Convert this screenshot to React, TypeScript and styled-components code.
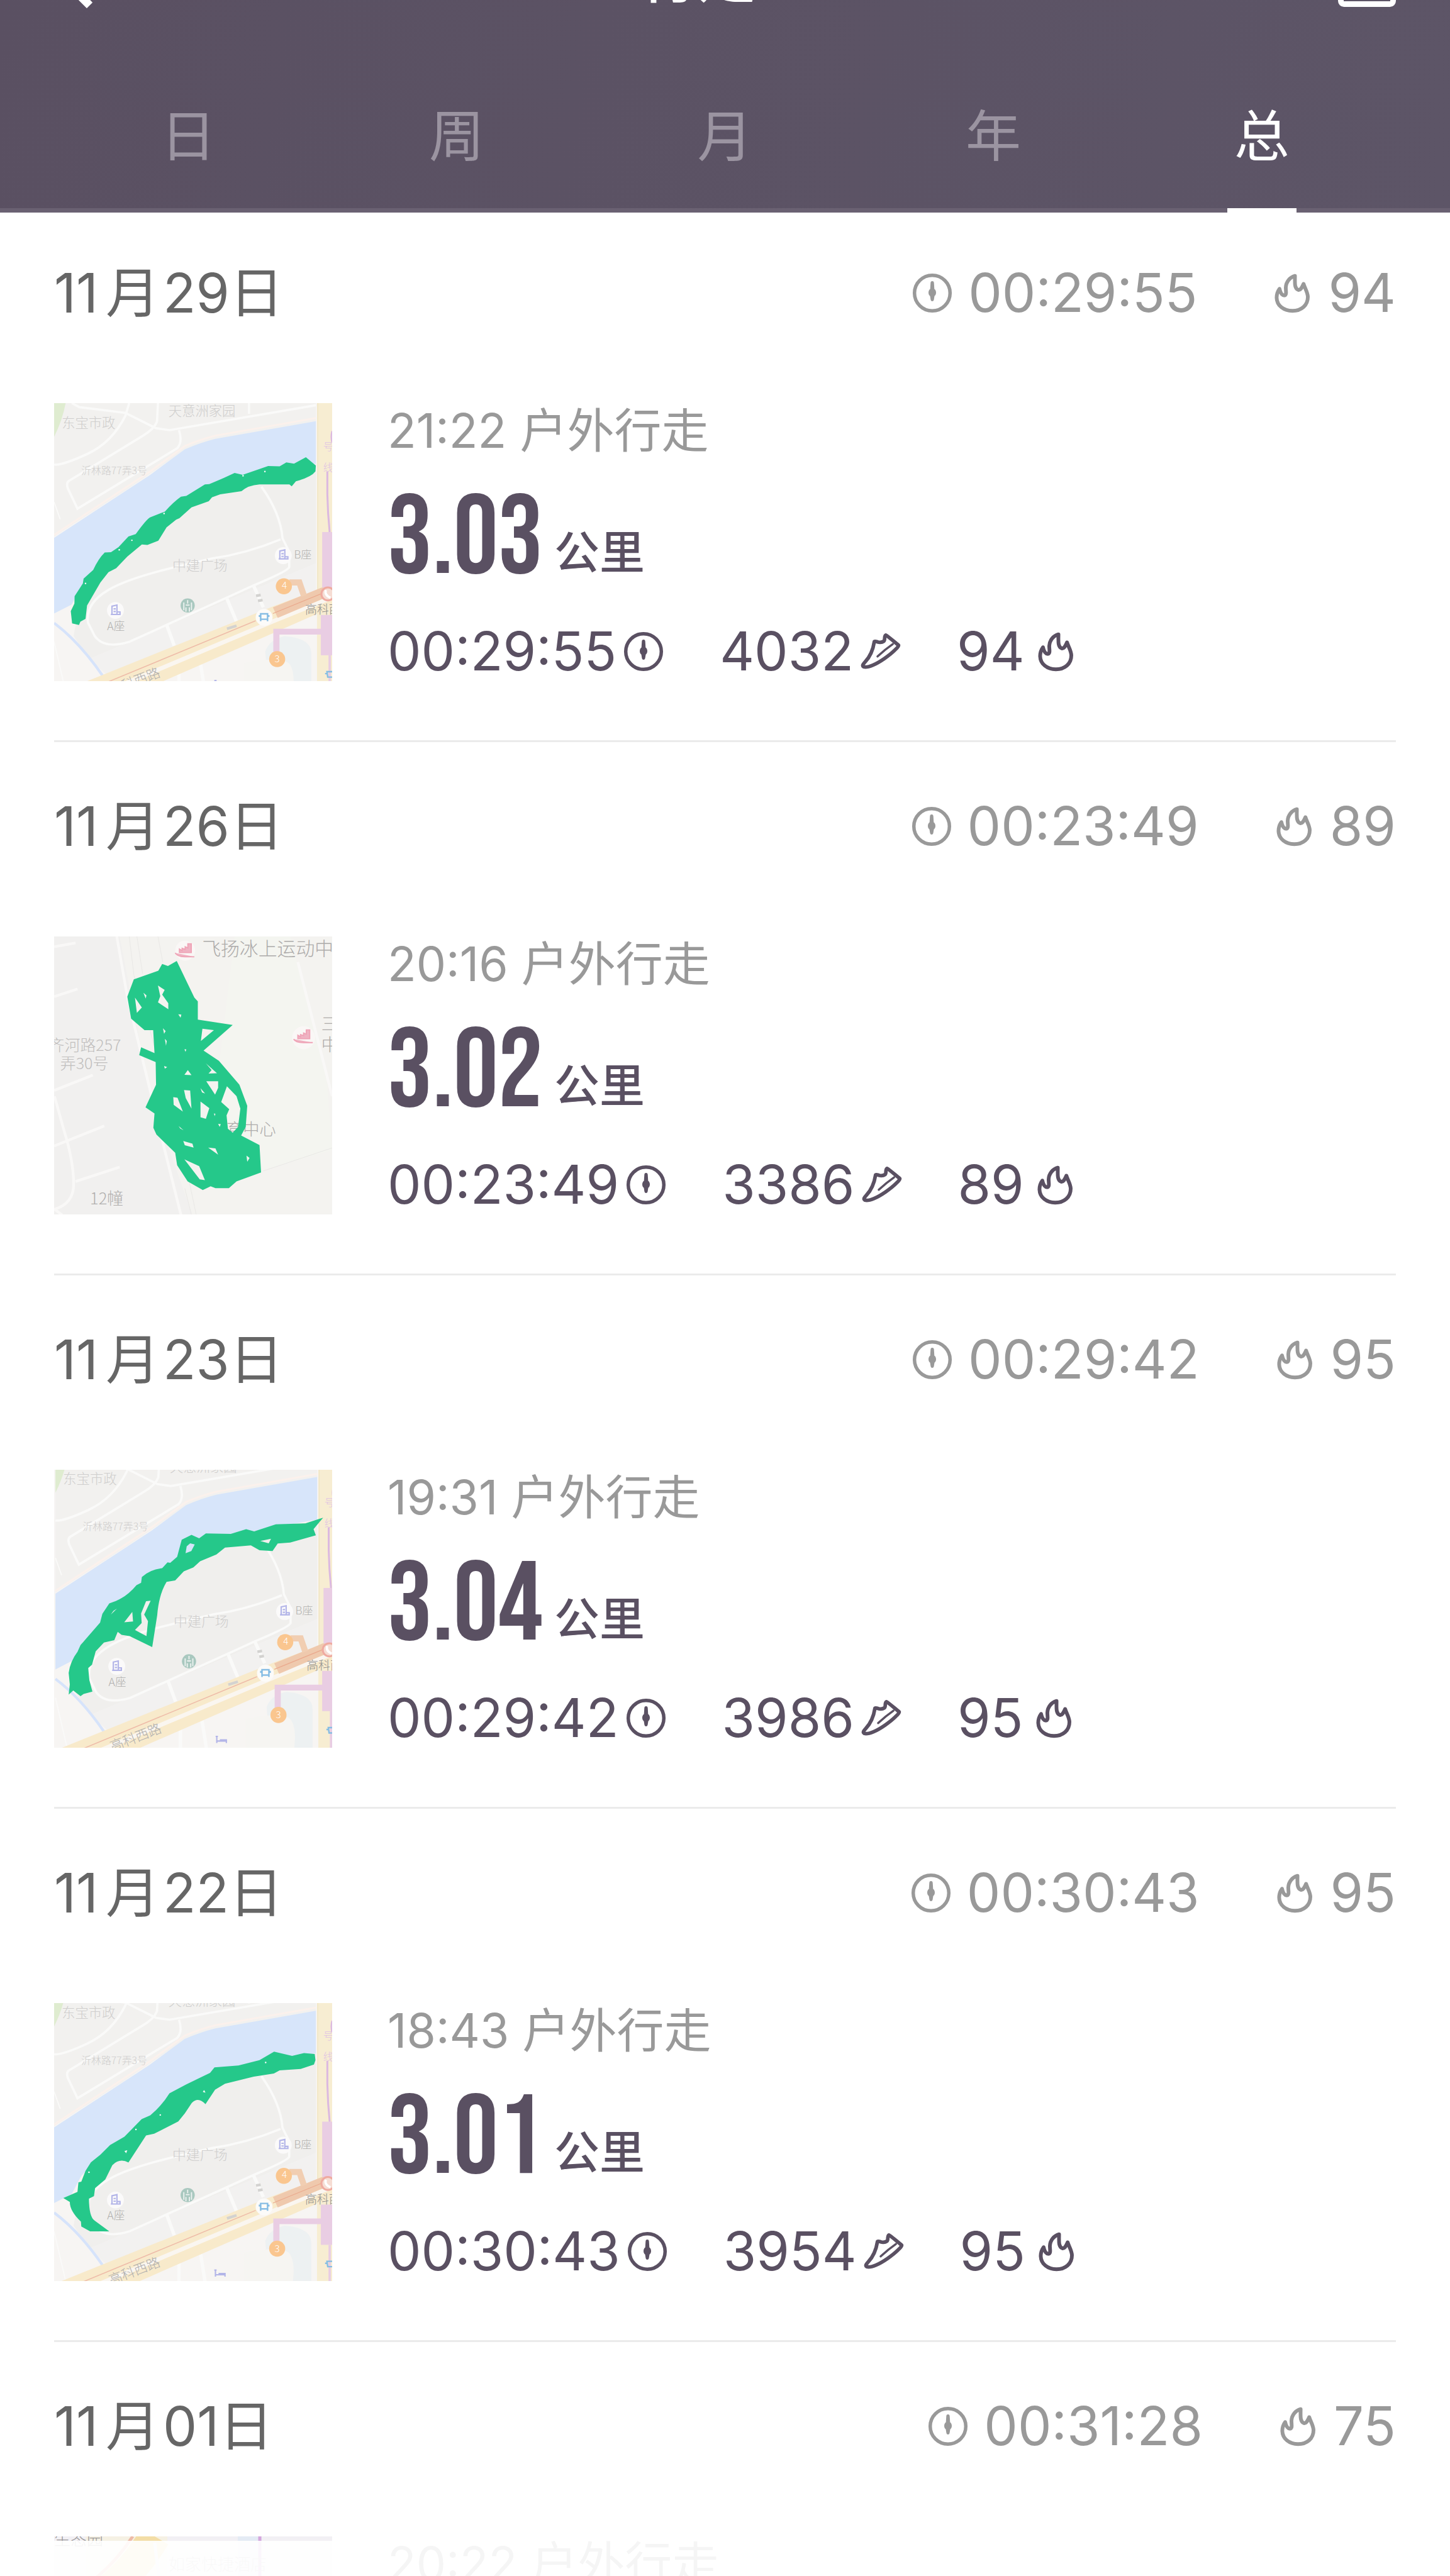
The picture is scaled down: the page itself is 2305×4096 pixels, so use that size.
import React, { useState } from "react";
import styled, { createGlobalStyle } from "styled-components";

const GlobalStyle = createGlobalStyle`
  *, *::before, *::after { box-sizing: border-box; }
  body {
    margin: 0;
    background: #fff;
    font-family: Inter, "Noto Sans CJK SC", sans-serif;
  }
  button { font: inherit; border: 0; background: none; padding: 0; cursor: pointer; }
`;

const ink = "#5a5062";
const muted = "#999";
const routeGreen = "#25c88a";

const Screen = styled.div`
  height: 100vh;
  overflow: hidden;
  position: relative;
`;

/* ---------- header ---------- */

const Header = styled.header`
  position: relative;
  z-index: 1;
  color: #fff;
  background: linear-gradient(100deg, #5a5062, #5d5567);
`;

/* The bar is mostly scrolled out above the top edge. */
const TopBar = styled.div`
  display: grid;
  grid-template-columns: 1fr auto 1fr;
  align-items: center;
  height: 120px;
  margin-top: -97px;
  padding: 0 86px;
`;

const Title = styled.h1`
  margin: 0;
  padding-right: 86px;
  font-size: 92px;
  line-height: 84px;
  font-weight: 500;
`;

const IconButton = styled.button<{ $end?: boolean }>`
  display: flex;
  color: inherit;
  justify-self: ${(p) => (p.$end ? "end" : "start")};
`;

const Tabs = styled.div`
  display: flex;
  height: 315px;
  padding: 0 86px;
  box-shadow: inset 0 -7px #6a6172;
`;

const Tab = styled.button<{ $active: boolean }>`
  flex: 1;
  position: relative;
  padding-top: 70px;
  font-size: 88px;
  line-height: 120px;
  color: ${(p) => (p.$active ? "#fff" : "#9b94a1")};

  &::after {
    content: "";
    position: absolute;
    left: 50%;
    bottom: 0;
    width: 110px;
    height: 7px;
    margin-left: -55px;
    background: ${(p) => (p.$active ? "#fff" : "transparent")};
  }
`;

/* ---------- list ---------- */

const List = styled.ul`
  list-style: none;
  margin: -6px 0 0;
  padding: 0 86px;
`;

const Day = styled.li`
  height: 848px;
  border-bottom: 3px solid #ebebeb;
`;

const DayHead = styled.div`
  display: flex;
  align-items: center;
  justify-content: space-between;
  height: 268px;
  margin-bottom: 41px;
`;

const DateText = styled.h2`
  display: flex;
  margin: 0;
  font-size: 86px;
  line-height: 120px;
  font-weight: 400;
  color: #666;
`;

const MonthMark = styled.span`
  padding: 0 5px 0 12px;
`;

const Totals = styled.div`
  display: flex;
  gap: 118px;
  color: ${muted};
`;

const Figure = styled.span<{ $gap: number }>`
  display: flex;
  align-items: center;
  gap: ${(p) => p.$gap}px;
  font-size: 85px;
  line-height: 120px;
`;

const Walk = styled.article`
  display: flex;
  gap: 88px;
`;

const MapFrame = styled.div`
  flex: none;
  width: 442px;
  height: 442px;
  overflow: hidden;

  svg { display: block; width: 100%; height: 100%; }
`;

const Details = styled.div`
  min-width: 0;
`;

const WalkName = styled.p`
  margin: 0;
  font-size: 75px;
  line-height: 88px;
  color: ${muted};
`;

const Distance = styled.p`
  display: flex;
  align-items: flex-end;
  gap: 18px;
  margin: 29px 0 0;
  height: 200px;
  color: ${ink};
`;

const Kilometres = styled.strong`
  font-family: "Bebas Neue", "Roboto Condensed", Roboto, sans-serif;
  font-size: 178px;
  line-height: 200px;
  font-weight: 400;
`;

const Unit = styled.span`
  padding-bottom: 44px;
  font-size: 72px;
  line-height: 72px;
  font-weight: 500;
`;

const Stats = styled.div`
  display: flex;
  gap: 88px;
  margin-top: 18px;
  color: ${ink};
`;

const BottomFade = styled.div`
  position: absolute;
  left: 0;
  right: 0;
  bottom: 0;
  height: 56px;
  background: rgba(255, 255, 255, 0.9);
`;

/* ---------- icons ---------- */

const BackIcon = () => (
  <svg width="64" height="100" viewBox="0 0 64 100" fill="none" stroke="currentColor" strokeWidth="13" aria-hidden="true">
    <path d="M56.5 4.5 11 50l45.5 45.5" />
  </svg>
);

const CalendarIcon = () => (
  <svg width="92" height="96" viewBox="0 0 92 96" fill="none" stroke="currentColor" strokeWidth="9" aria-hidden="true">
    <rect x="4.500" y="12" width="83" height="79.500" rx="5" />
    <path d="M5 38h82M28 0v22M64 0v22" />
  </svg>
);

const ClockIcon = () => (
  <svg width="66" height="66" viewBox="0 0 66 66" aria-hidden="true">
    <circle cx="33" cy="33" r="28.300" fill="none" stroke="currentColor" strokeWidth="5.500" />
    <path
      d="M33 14c1.800 0 2.600 1.200 2.700 3l.6 9.500c1.800 1.200 2.700 3.300 2.700 5.700s-.9 4.300-2.500 5.500l-.8 5c-.3 2.300-1.200 3.300-2.700 3.300s-2.400-1-2.700-3.300l-.8-5c-1.600-1.200-2.500-3.100-2.500-5.500s.9-4.500 2.700-5.700l.6-9.500c.1-1.800.9-3 2.700-3z"
      fill="currentColor"
    />
  </svg>
);

const ShoeIcon = () => (
  <svg width="66" height="66" viewBox="36 42 288 288" fill="none" stroke="currentColor" strokeLinejoin="round" strokeLinecap="round" aria-hidden="true">
    <path
      d="M136 116C148 114 150 117 158 119C172 123 190 122 202 114C212 108 202 76 216 72C236 84 276 120 304 142C304 152 290 164 280 174C240 214 170 262 126 280C102 290 78 296 62 292C48 284 60 272 72 258C104 224 126 180 136 116Z"
      strokeWidth="25"
    />
    <path d="M264 134C232 156 188 192 158 220" strokeWidth="15" />
  </svg>
);

const FlameIcon = () => (
  <svg width="66" height="66" viewBox="25 45 290 290" fill="none" stroke="currentColor" strokeWidth="26" strokeLinejoin="round" aria-hidden="true">
    <path d="M190 70C154 80 128 112 126 150C125 174 134 200 118 206C98 208 88 188 82 160C66 182 62 204 62 222C64 278 112 314 172 314C234 314 280 276 280 216C278 182 258 154 250 126C240 146 232 170 214 168C184 158 190 116 190 70Z" />
  </svg>
);

/* ---------- maps ---------- */

const mapFont = { fontFamily: '"Noto Sans CJK SC", sans-serif', fontWeight: 300 };

const RiverMap = () => (
  <g style={mapFont}>
    <rect x="0" y="0" width="1600" height="1800" fill="#f7f5f3" />
    <path d="M58 84H1424V180L900 272L740 330L430 540L58 780Z" fill="#f2f1ef" />
    <path d="M58 60H122Q108 160 58 260Z" fill="#dfecd0" />
    <path d="M1424 400V920L240 1420L160 1300Q190 1080 430 830L720 600L1030 500Z" fill="#f0efed" />
    <path d="M240 1420L1424 920V1060L330 1500Z" fill="#f2f1f0" />
    <path d="M58 787L560 458L740 325Q820 290 900 270L1424 178V400L1200 440L1000 480L850 530L700 610L600 690L520 770L440 830L340 890L280 960L200 1040L150 1135L58 1182Z" fill="#d7e5fa" />
    <path d="M58 772L560 440L740 308Q820 274 900 254L1424 162" fill="none" stroke="#fbf1ec" strokeWidth="10" />

    <g fill="none" stroke="#fafaf9" strokeWidth="12">
      <path d="M150 84L190 105L430 135L590 215L660 225L1424 95" />
      <path d="M450 84L430 150Q360 290 230 350T58 405" />
      <path d="M600 84L595 180Q580 220 520 255L135 490Q120 500 130 530L180 635L700 320Q730 290 710 225" />
      <path d="M1075 84V140" />
      <path d="M1140 520Q1240 660 1250 790L1285 860V940Q1280 960 1100 1035L980 1090L450 1330Q320 1370 270 1300L235 1230Q220 1130 340 1060Q440 1000 690 940L880 895Q1060 870 1240 795" />
      <path d="M960 1105L1010 1225M645 1240L685 1350M1100 1040L1150 1150M710 1470V1700M820 1430L850 1620" strokeWidth="18" />
      <path d="M58 600L90 690M58 1330L130 1640" strokeWidth="6" />
    </g>
    <path d="M58 1232Q190 1330 315 1512" fill="none" stroke="#d6e3fb" strokeWidth="14" />
    <path d="M1160 1380Q1180 1320 1260 1300Q1400 1310 1400 1390V1620H1180Z" fill="#edf1f2" />
    <path d="M1050 1440Q1260 1400 1290 1450Q1320 1500 1300 1620H1050Z" fill="#f6f5f2" />

    <rect x="1430" y="0" width="80" height="1800" fill="#f7edd2" />
    <path d="M1434 84V1060" stroke="#ece0c0" strokeWidth="3" />
    <path d="M40 1612L1200 1145L1509 1030V1150L560 1565L300 1680Z" fill="#f8eacb" />
    <path d="M160 1660L1220 1215L1509 1098" fill="none" stroke="#faf6f0" strokeWidth="22" />
    <path d="M180 1605L1110 1220" stroke="#eebba8" strokeWidth="5" />
    <path d="M1200 1150L1450 1048L1509 1030V1085L1225 1205Z" fill="#efc9ad" />
    <path d="M1200 1182L1450 1080" stroke="#eaa98d" strokeWidth="4" />
    <path d="M1285 1020H1338L1362 1090" fill="none" stroke="#f1ceb2" strokeWidth="32" />

    <g fill="#e9cde3">
      <rect x="1457" y="757" width="52" height="290" />
      <rect x="1450" y="1190" width="60" height="210" />
      <path d="M1460 1262H1202V1400H1234V1292H1460Z" />
      <rect x="1490" y="1400" width="12" height="300" />
    </g>
    <path d="M1484 440V560Q1486 660 1496 757" fill="none" stroke="#dcb9e0" strokeWidth="10" />
    <path d="M1509 230Q1500 260 1509 290" fill="none" stroke="#dcb9e0" strokeWidth="8" />

    <g fill="#fac68f">
      <circle cx="1257" cy="1040" r="42" />
      <circle cx="1222" cy="1420" r="42" />
    </g>
    <g fill="#fff" fontSize="50" textAnchor="middle">
      <text x="1260" y="1052">4</text>
      <text x="1222" y="1438">3</text>
    </g>
    <circle cx="1487" cy="1080" r="34" fill="#f6ddd4" stroke="#efaaa0" strokeWidth="10" />
    <path d="M1476 1060Q1468 1086 1500 1100" fill="none" stroke="#fff" strokeWidth="12" />

    <circle cx="1254" cy="880" r="44" fill="#fbfafa" />
    <circle cx="378" cy="1166" r="44" fill="#fbfafa" />
    <path d="M1236 896V856L1262 850V896M1244 870H1256M1244 884H1256M1230 897H1278V886H1264" fill="none" stroke="#b3b5e8" strokeWidth="7" />
    <path d="M360 1184V1144L386 1138V1184M368 1158H380M368 1172H380M354 1187H402V1174H388" fill="none" stroke="#b3b5e8" strokeWidth="7" />
    <circle cx="755" cy="1140" r="37" fill="#a9c8bf" />
    <path d="M735 1125V1165M755 1112V1130M775 1125V1165M745 1138H765M746 1150V1172M764 1150V1172" stroke="#eef3f1" strokeWidth="6" />
    <circle cx="1154" cy="1202" r="44" fill="#fcfbf9" />
    <path d="M1136 1184H1172V1212H1136ZM1136 1214V1222M1172 1214V1222M1130 1190V1200M1178 1190V1200" fill="none" stroke="#86bde4" strokeWidth="8" />
    <path d="M1482 1486H1520V1514H1486ZM1476 1492V1500" fill="none" stroke="#86bde4" strokeWidth="8" />
    <path d="M900 1530V1566M900 1556H950M916 1550H950V1566M894 1532H906" fill="none" stroke="#b3b5e8" strokeWidth="7" />
    <path d="M1112 1090L1136 1086M1122 1116L1146 1112M960 1262L1010 1246" stroke="#d3d2d0" strokeWidth="14" />

    <g fill="#cfcecd">
      <text x="98" y="212" fontSize="70">东宝市政</text>
      <text x="655" y="150" fontSize="70">天意洲家园</text>
      <text x="200" y="455" fontSize="52">沂林路77弄3号</text>
      <text x="675" y="956" fontSize="72">中建广场</text>
    </g>
    <g fill="#b0afae">
      <text x="1310" y="895" fontSize="56">B座</text>
      <text x="335" y="1268" fontSize="58">A座</text>
      <text x="1368" y="1184" fontSize="62" fill="#8f8e8d">高科西路</text>
      <text x="355" y="1610" fontSize="70" transform="rotate(-21 355 1610)">高科西路</text>
    </g>
    <text x="1462" y="330" fontSize="52" fill="#dfc2e4">号</text>
    <text x="1462" y="438" fontSize="52" fill="#dfc2e4">线</text>
  </g>
);

const CourtMap = () => (
  <g style={mapFont}>
    <rect x="0" y="0" width="1600" height="1600" fill="#f4f3f0" />
    <path d="M58 66H400L560 900L780 1520H58Z" fill="#f1f0ef" />
    <path d="M1000 66H1290L1480 800L1509 1180L1100 1300L900 900Z" fill="#f4f5f0" />
    <g fill="none" stroke="#f9f8f7" strokeWidth="14">
      <path d="M58 120L170 100M58 380L180 340M58 870L260 790M60 900L110 1080Q160 1240 160 1360Q160 1460 60 1490L100 1520M58 1160L320 1055M170 1345L400 1270" />
      <path d="M385 66L440 380L620 1120L720 1520" />
      <path d="M1330 200L1509 900" />
    </g>
    <g fill="none" stroke="#e8e7e5" strokeWidth="3">
      <path d="M450 66L475 270L560 560L760 1330L800 1520M490 66L520 260M600 66L625 200M740 1380L775 1520M1150 1290L1509 1170" />
    </g>

    <circle cx="742" cy="140" r="52" fill="#faf7f6" />
    <circle cx="1360" cy="595" r="60" fill="#faf7f6" />
    <path d="M690 152Q700 172 740 172H790M712 150L712 132L726 140V128L742 134V120L756 126L756 104H774V150Z" fill="#efb3c3" stroke="#efa3b6" strokeWidth="6" />
    <path d="M1308 602Q1318 620 1358 620H1408M1330 600L1330 582L1344 590V578L1360 584V570L1374 576L1374 554H1392V600Z" fill="#efb3c3" stroke="#efa3b6" strokeWidth="6" />

    <g fill="#adabaa">
      <text x="830" y="164" fontSize="98">飞扬冰上运动中</text>
      <text x="1452" y="556" fontSize="90">三</text>
      <text x="1452" y="664" fontSize="90">中</text>
      <text x="958" y="1104" fontSize="86">育中心</text>
    </g>
    <g fill="#c0bebd">
      <text x="30" y="662" fontSize="82">齐河路257</text>
      <text x="90" y="760" fontSize="82">弄30号</text>
      <text x="245" y="1464" fontSize="84" fill="#b0aead">12幢</text>
    </g>

    <path
      fillRule="evenodd"
      fill={routeGreen}
      d="M474 290L602 245L622 210L652 220L698 194L790 385L808 405V500L990 528L838 662L918 715L1025 840L1066 950L1058 1060L1034 1105L1130 1155L1138 1298L1010 1345L970 1380H900L875 1370L834 1390L755 1345L700 1260L690 1195L592 1100L576 1065L582 990L535 958L590 840L588 722L502 686L512 645L582 675L575 555H530L460 495L440 380Z
      M480 385L490 465L516 437Z M600 322L635 345L622 370L654 415V446L600 410L612 378Z M524 360L540 374L536 390Z
      M832 548L892 555L824 612Z M850 728L908 780L864 782L880 764Z M852 822H914V856L898 892Z M738 788L756 764L775 790Z
      M736 868L768 870L775 965L745 910Z M680 905L702 908L730 980L682 945Z M822 928L868 962L850 1018L822 1010Z
      M960 848L1010 900L1030 965L1018 1060L990 1090L965 1070L958 1000L972 968L930 930Z
      M732 1134L780 1148L786 1168L740 1156Z M862 1168L900 1172L914 1205Z M738 1230L815 1265L845 1338L818 1334Z
      M626 545L640 560L632 574Z M706 472L722 474L718 490Z M822 858L846 886L830 880Z M1062 1210L1078 1222L1066 1242Z M708 1056L734 1078L716 1068Z M914 1044L928 1046L922 1060Z M636 600L646 612L642 636Z M738 655L748 655L744 668Z M632 742L648 748L636 756Z M892 990L900 992L896 1004Z"
    />
  </g>
);

type RouteKind = "bank" | "court" | "detour" | "curve" | "north";

const routes: Record<RouteKind, React.ReactNode> = {
  bank: (
    <svg viewBox="58 84 1451 1451" aria-hidden="true">
      <RiverMap />
      <path
        fill={routeGreen}
        d="M1372 366L1424 410L1422 440Q1400 470 1320 492L1298 518L1286 508H1130Q1070 512 1036 544L925 560L882 576L865 596L775 628L712 685L695 692L645 732L602 802L545 824L516 822L440 885L382 946L342 966L300 1020L230 1140L222 1210L195 1225L188 1242L152 1234L145 1170L164 1130L165 1092L208 1025L212 1000L262 955Q290 895 322 864L355 862L394 836L446 780L484 768Q540 690 560 680L636 650Q680 600 720 572L748 568L845 508L868 507L945 474L1000 448L1042 458L1175 412L1235 414L1270 393L1310 400Z"
      />
      <g fill="#fff">
        <circle cx="1158" cy="441" r="4" /><circle cx="1044" cy="463" r="4" /><circle cx="464" cy="800" r="4" />
        <circle cx="398" cy="850" r="4" /><circle cx="632" cy="660" r="4" /><circle cx="222" cy="1025" r="4" />
      </g>
    </svg>
  ),
  court: (
    <svg viewBox="58 66 1451 1451" aria-hidden="true">
      <CourtMap />
    </svg>
  ),
  detour: (
    <svg viewBox="58 70 1451 1451" aria-hidden="true">
      <g transform="translate(7 -70)"><RiverMap /></g>
      <path
        fillRule="evenodd"
        fill={routeGreen}
        d="M1462 320L1412 380L1424 412L1290 450L1225 455L1198 494L1130 490L1085 465L950 476L905 512L820 548L785 580L735 600L690 648L645 655Q605 720 596 830L570 996L452 938L410 932L390 916L372 960L318 972L275 1018L256 1088L236 1105L242 1168L258 1228L212 1240L196 1252L158 1222L134 1244L140 1190L134 1130Q142 1070 180 1020L196 985L298 868L310 822L346 768L380 755Q440 730 488 672L512 660L516 630Q560 590 622 584L650 553L664 556L700 525L724 435L775 410L815 428L850 402L980 405L1060 380L1102 392L1215 355L1370 350Z
        M744 506L750 470L768 454L792 460L774 494Z M1134 442L1190 430L1178 454Z M424 866L466 812L470 862Z M480 906L515 870L512 820L538 756L562 754L528 826L548 860L540 938Z M354 826L368 806L386 795Z"
      />
    </svg>
  ),
  curve: (
    <svg viewBox="58 54 1451 1451" aria-hidden="true">
      <g transform="translate(0 -84)"><RiverMap /></g>
      <path
        fill={routeGreen}
        d="M1206 308L1300 330L1362 315L1418 320L1422 352L1414 375L1345 398L1235 405L1205 422L1100 438L1010 460L950 475L898 506L848 582Q810 540 776 576L740 630L706 672L580 736L538 745L446 886Q400 862 362 900L325 975L272 1020L266 1062L240 1075Q240 1170 270 1190L346 1246H246L200 1220L198 1195Q140 1140 140 1092L106 1072L180 1040L185 990L200 986L222 930L250 885L300 845L350 795L425 752L515 660L560 640Q620 590 660 525L745 480L872 418L895 390L1020 380L1130 352Z"
      />
      <g fill="#fff">
        <path d="M425 826L440 822L434 838Z" /><path d="M834 518L841 508L848 522Z" />
        <circle cx="1162" cy="364" r="4" /><circle cx="612" cy="638" r="4" /><circle cx="485" cy="714" r="4" /><circle cx="240" cy="937" r="4" />
      </g>
    </svg>
  ),
  north: (
    <svg viewBox="0 0 442 442" aria-hidden="true">
      <rect width="442" height="442" fill="#f2f0f4" />
      <rect x="50" width="130" height="442" fill="#f5f1e4" />
      <path d="M160 0Q100 100 0 130" fill="none" stroke="#f3dda6" strokeWidth="50" />
      <path d="M125 0Q80 70 0 108" fill="none" stroke="#eebba8" strokeWidth="5" />
      <rect x="292" width="38" height="442" fill="#e4ebf4" />
      <path d="M327 0V442" stroke="#d5a6dd" strokeWidth="5" />
      <path d="M160 10L185 220" stroke="#e5e6f4" strokeWidth="5" />
      <g style={mapFont} fontSize="26" fill="#9a9898">
        <text x="0" y="14">生态园</text>
        <text x="182" y="54" fill="#c4c3c1">如家快捷酒店</text>
      </g>
    </svg>
  ),
};

/* ---------- data ---------- */

type WalkRecord = {
  month: number;
  day: string;
  time: string;
  kcal: number;
  start: string;
  route: RouteKind;
  km?: string;
  steps?: number;
};

const records: WalkRecord[] = [
  { month: 11, day: "29", time: "00:29:55", kcal: 94, start: "21:22", km: "3.03", steps: 4032, route: "bank" },
  { month: 11, day: "26", time: "00:23:49", kcal: 89, start: "20:16", km: "3.02", steps: 3386, route: "court" },
  { month: 11, day: "23", time: "00:29:42", kcal: 95, start: "19:31", km: "3.04", steps: 3986, route: "detour" },
  { month: 11, day: "22", time: "00:30:43", kcal: 95, start: "18:43", km: "3.01", steps: 3954, route: "curve" },
  { month: 11, day: "01", time: "00:31:28", kcal: 75, start: "20:22", route: "north" },
];

const periods = ["日", "周", "月", "年", "总"];

const DayRow = ({ record }: { record: WalkRecord }) => (
  <Day>
    <DayHead>
      <DateText>
        {record.month}
        <MonthMark>月</MonthMark>
        {record.day}日
      </DateText>
      <Totals>
        <Figure $gap={24}><ClockIcon />{record.time}</Figure>
        <Figure $gap={24}><FlameIcon />{record.kcal}</Figure>
      </Totals>
    </DayHead>
    <Walk>
      <MapFrame>{routes[record.route]}</MapFrame>
      <Details>
        <WalkName>{record.start} 户外行走</WalkName>
        {record.km && (
          <>
            <Distance>
              <Kilometres>{record.km}</Kilometres>
              <Unit>公里</Unit>
            </Distance>
            <Stats>
              <Figure $gap={10}>{record.time}<ClockIcon /></Figure>
              <Figure $gap={10}>{record.steps}<ShoeIcon /></Figure>
              <Figure $gap={16}>{record.kcal}<FlameIcon /></Figure>
            </Stats>
          </>
        )}
      </Details>
    </Walk>
  </Day>
);

export default function App() {
  const [period, setPeriod] = useState("总");
  return (
    <Screen>
      <GlobalStyle />
      <Header>
        <TopBar>
          <IconButton type="button"><BackIcon /></IconButton>
          <Title>行走</Title>
          <IconButton type="button" $end><CalendarIcon /></IconButton>
        </TopBar>
        <Tabs role="tablist">
          {periods.map((p) => (
            <Tab key={p} type="button" role="tab" aria-selected={p === period} $active={p === period} onClick={() => setPeriod(p)}>
              {p}
            </Tab>
          ))}
        </Tabs>
      </Header>
      <List>
        {records.map((r) => (
          <DayRow key={r.day} record={r} />
        ))}
      </List>
      <BottomFade />
    </Screen>
  );
}
